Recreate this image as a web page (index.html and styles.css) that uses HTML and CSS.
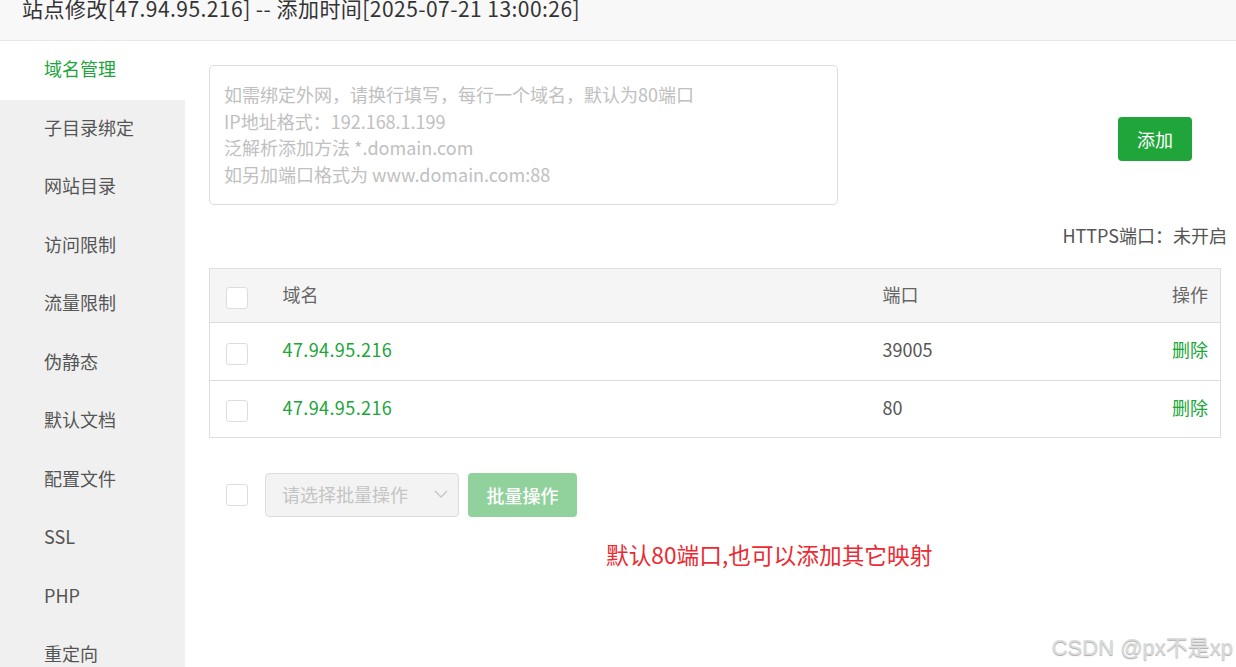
FILE: index.html
```html
<!DOCTYPE html>
<html lang="zh-CN">
<head>
  <meta charset="UTF-8">
  <meta name="viewport" content="width=device-width, initial-scale=1">
  <title>站点修改</title>
  <link rel="stylesheet" href="styles.css">
</head>
<body>

<div class="title-bar">站点修改[47.94.95.216] -- 添加时间[2025-07-21 13:00:26]</div>

<div class="layout">
  <ul class="side-menu">
    <li class="active">域名管理</li>
    <li>子目录绑定</li>
    <li>网站目录</li>
    <li>访问限制</li>
    <li>流量限制</li>
    <li>伪静态</li>
    <li>默认文档</li>
    <li>配置文件</li>
    <li>SSL</li>
    <li>PHP</li>
    <li>重定向</li>
  </ul>

  <div class="main">
    <div class="add-row">
      <textarea class="domain-input" placeholder="如需绑定外网，请换行填写，每行一个域名，默认为80端口&#10;IP地址格式：192.168.1.199&#10;泛解析添加方法 *.domain.com&#10;如另加端口格式为 www.domain.com:88"></textarea>
      <button class="add-btn">添加</button>
    </div>

    <div class="https-info">HTTPS端口：未开启</div>

    <table class="domain-table">
      <colgroup>
        <col class="col-check">
        <col class="col-domain">
        <col>
        <col class="col-action">
      </colgroup>
      <thead>
        <tr>
          <th><span class="check"></span></th>
          <th>域名</th>
          <th>端口</th>
          <th class="right">操作</th>
        </tr>
      </thead>
      <tbody>
        <tr>
          <td><span class="check"></span></td>
          <td class="domain">47.94.95.216</td>
          <td>39005</td>
          <td class="right"><a class="del-link">删除</a></td>
        </tr>
        <tr>
          <td><span class="check"></span></td>
          <td class="domain">47.94.95.216</td>
          <td>80</td>
          <td class="right"><a class="del-link">删除</a></td>
        </tr>
      </tbody>
    </table>

    <div class="batch-row">
      <span class="check"></span>
      <div class="batch-select">
        <span>请选择批量操作</span>
        <svg width="14" height="8" viewBox="0 0 14 8"><path d="M1 1l6 6 6-6" fill="none" stroke="#c4c4c4" stroke-width="1.3"/></svg>
      </div>
      <button class="batch-btn">批量操作</button>
    </div>

    <p class="note">默认80端口,也可以添加其它映射</p>
  </div>
</div>

<div class="watermark">CSDN @px不是xp</div>

</body>
</html>
```

FILE: styles.css
```css
body {
  margin: 0;
  font-family: "Noto Sans CJK SC", "Noto Sans", sans-serif;
  color: #555;
  background-color: #fff;
  overflow: hidden;
}

.title-bar {
  height: 40px;
  line-height: 16px;
  padding: 0 22px;
  font-size: 21px;
  letter-spacing: 0.45px;
  color: #333;
  background-color: #f8f8f8;
  border-bottom: 1px solid #e8e8e8;
  white-space: nowrap;
}

.layout {
  display: flex;
  height: 626px;
}

.side-menu {
  width: 185px;
  margin: 0;
  padding: 0;
  list-style: none;
  background-color: #f0f0f0;
  flex-shrink: 0;
}

.side-menu li {
  height: 58.5px;
  line-height: 55.5px;
  padding-left: 44px;
  font-size: 18px;
  color: #555;
}

.side-menu li.active {
  background-color: #fff;
  color: #20a53a;
}

.main {
  flex: 1;
  padding: 24px 9px 0 24px;
}

.add-row {
  display: flex;
  align-items: center;
}

.domain-input {
  width: 629px;
  height: 140px;
  box-sizing: border-box;
  padding: 15px 14px;
  border: 1px solid #ddd;
  border-radius: 5px;
  font-family: inherit;
  font-size: 18px;
  line-height: 26.7px;
  resize: none;
  outline: none;
}

.domain-input::placeholder {
  color: #c0c0c0;
}

.add-btn {
  margin-left: auto;
  margin-right: 35px;
  margin-top: 7px;
  width: 74px;
  height: 44px;
  border: none;
  border-radius: 4px;
  background-color: #20a53a;
  color: #fff;
  font-family: inherit;
  font-size: 18px;
  cursor: pointer;
}

.https-info {
  margin-top: 17px;
  text-align: right;
  font-size: 18px;
  line-height: 26px;
  color: #555;
}

.domain-table {
  margin-top: 20px;
  width: 1012px;
  border-collapse: collapse;
  table-layout: fixed;
  border: 1px solid #ddd;
  font-size: 18px;
}

.col-check {
  width: 56px;
}

.col-domain {
  width: 600px;
}

.col-action {
  width: 120px;
}

.domain-table th {
  box-sizing: border-box;
  height: 54px;
  padding: 0 17px 3px;
  background-color: #f5f5f5;
  text-align: left;
  font-weight: normal;
  color: #666;
  border-bottom: 1px solid #ddd;
}

.domain-table td {
  box-sizing: border-box;
  height: 57.5px;
  padding: 0 17px 4px;
  border-bottom: 1px solid #ddd;
  color: #555;
}

.domain-table th:first-child,
.domain-table td:first-child {
  padding-left: 16px;
  padding-bottom: 0;
}

.domain-table th.right,
.domain-table td.right {
  text-align: right;
  padding-right: 12px;
}

.domain-table td.domain {
  color: #20a53a;
  letter-spacing: 0.4px;
}

.del-link {
  color: #20a53a;
  cursor: pointer;
}

.check {
  display: inline-block;
  width: 22px;
  height: 22px;
  box-sizing: border-box;
  border: 1px solid #ddd;
  border-radius: 3px;
  background-color: #fff;
  vertical-align: middle;
}

.batch-row {
  display: flex;
  align-items: center;
  margin-top: 35px;
  padding-left: 17px;
}

.batch-select {
  display: flex;
  align-items: center;
  justify-content: space-between;
  width: 194px;
  height: 44px;
  box-sizing: border-box;
  margin-left: 17px;
  padding: 0 10px 2px 16px;
  border: 1px solid #ddd;
  border-radius: 4px;
  background-color: #f3f3f3;
  color: #c4c4c4;
  font-size: 18px;
}

.batch-btn {
  margin-left: 9px;
  width: 109px;
  height: 44px;
  border: none;
  border-radius: 4px;
  background-color: #90d19c;
  color: #fff;
  font-family: inherit;
  font-size: 18px;
  font-weight: 500;
}

.note {
  margin: 23px 0 0 397px;
  font-size: 22.7px;
  line-height: 30px;
  color: #eb2a31;
}

.watermark {
  position: absolute;
  right: 3px;
  bottom: 6px;
  font-family: "Liberation Sans", "Noto Sans CJK SC", sans-serif;
  font-size: 22px;
  color: #dcdcdc;
  text-shadow: 0 1px 1px #aaa;
}
```
